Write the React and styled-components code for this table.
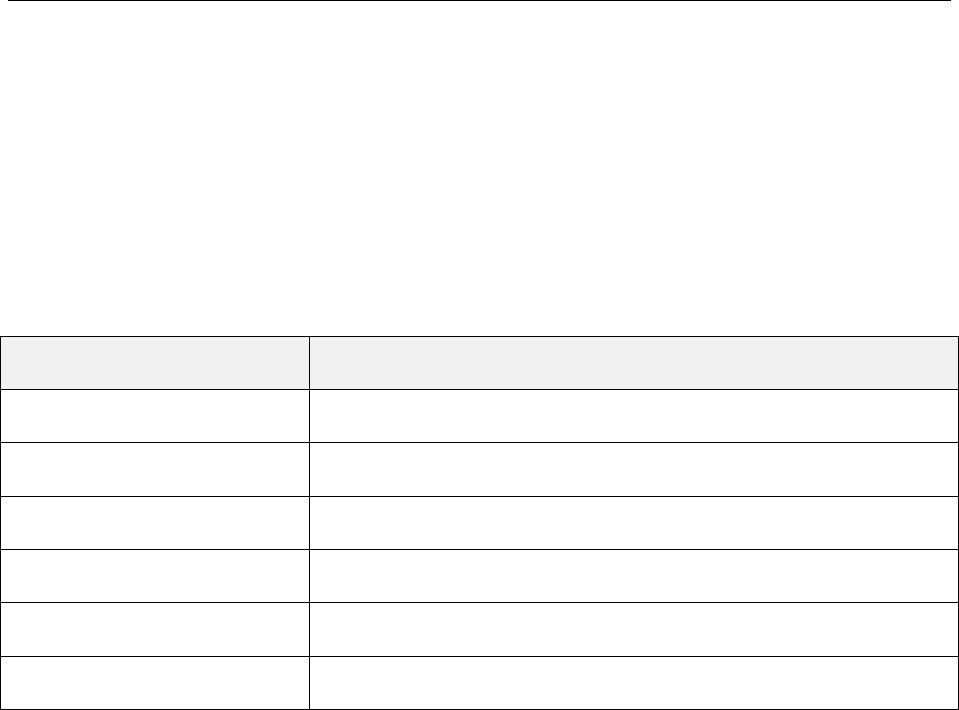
import React from "react";
import styled, { createGlobalStyle } from "styled-components";

const GlobalStyle = createGlobalStyle`
  html, body {
    margin: 0;
    padding: 0;
    background: #ffffff;
    font-family: "Liberation Sans", Arial, sans-serif;
  }
`;

const Page = styled.div`
  width: 959px;
  height: 710px;
  overflow: hidden;
`;

const Rule = styled.div`
  height: 1px;
  margin: 0 8px;
  background: #000000;
`;

const Table = styled.table`
  width: 959px;
  height: 374px;
  margin-top: 335px;
  border-collapse: collapse;
  table-layout: fixed;
`;

const HeadCell = styled.th`
  border: 1px solid #000000;
  background: #f1f1f1;
  padding: 0;
  width: ${({ $width }) => $width || "auto"};
`;

const Cell = styled.td`
  border: 1px solid #000000;
  padding: 0;
`;

const Row = styled.tr`
  height: 53px;
`;

const rows = [1, 2, 3, 4, 5, 6];

const App = () => {
  return (
    <Page>
      <GlobalStyle />
      <Rule />
      <Table>
        <thead>
          <Row>
            <HeadCell $width="308px" />
            <HeadCell />
          </Row>
        </thead>
        <tbody>
          {rows.map((r) => (
            <Row key={r}>
              <Cell />
              <Cell />
            </Row>
          ))}
        </tbody>
      </Table>
    </Page>
  );
};

export default App;
